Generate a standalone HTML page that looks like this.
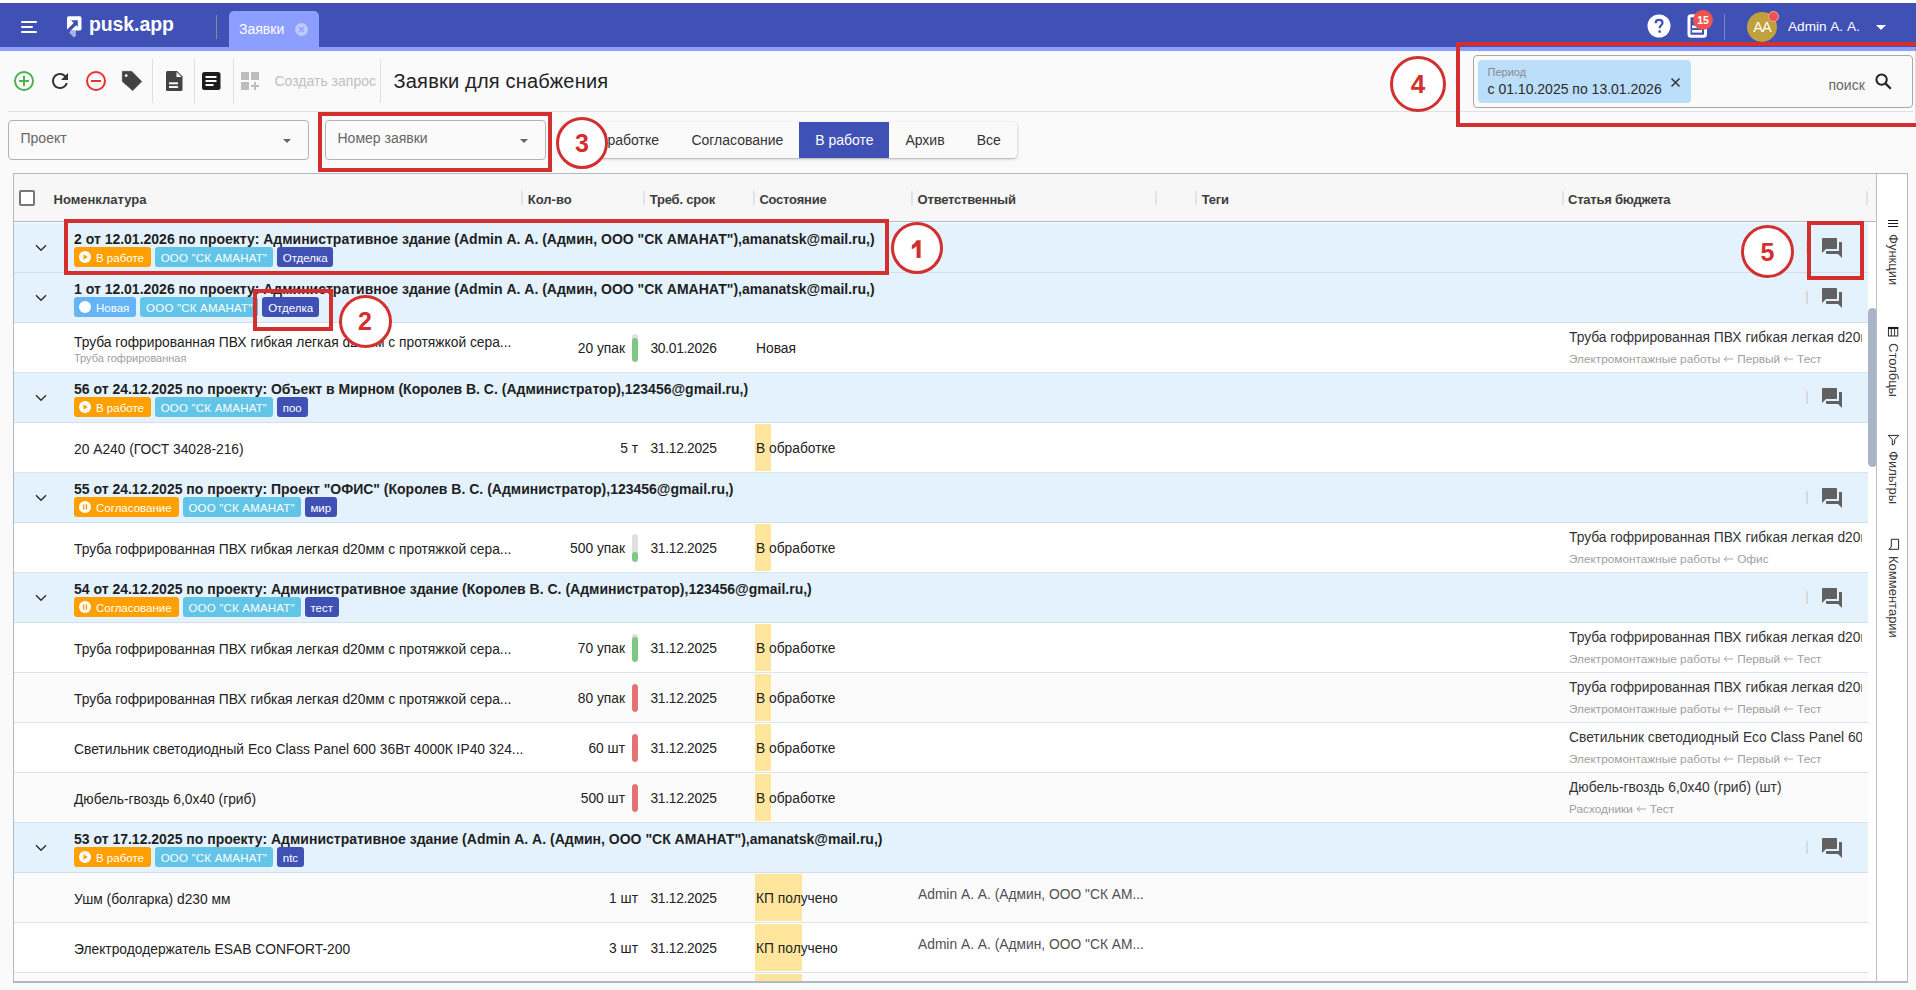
<!DOCTYPE html><html><head><meta charset="utf-8"><title>Заявки</title><style>
*{box-sizing:border-box;margin:0;padding:0}
html,body{width:1916px;height:990px;overflow:hidden;background:#fafafa;font-family:"Liberation Sans",sans-serif;color:#212121}
.abs{position:absolute}
.t{position:absolute;white-space:nowrap;line-height:1}
#topw{left:0;top:0;width:1916px;height:3px;background:#fff}
#hdr{left:0;top:3px;width:1916px;height:44px;background:#3f51b5}
#strip{left:0;top:47px;width:1916px;height:4px;background:#8c9eff}
.sep{position:absolute;width:1px;background:#e0e0e0}
.hsep{position:absolute;height:1px;background:#e0e0e0}
.sel{position:absolute;border:1px solid #b3b3b3;border-radius:4px;background:#fafafa}
.tri{position:absolute;width:0;height:0;border-left:4.5px solid transparent;border-right:4.5px solid transparent;border-top:4.5px solid #666}
#tabs{left:562px;top:122px;width:455px;height:36px;background:#fafafa;border-radius:4px;box-shadow:0 1px 3px rgba(0,0,0,.25),0 1px 1px rgba(0,0,0,.08)}
.tab{position:absolute;top:0;height:36px;font-size:14px;line-height:36px;color:#333;white-space:nowrap}
#tbl{left:13px;top:173px;width:1895px;height:810px;border:1px solid #b0b8c4;border-bottom-width:2px;background:#fff;overflow:hidden}
.row{position:absolute;left:0;width:1854px;height:50px;border-bottom:1px solid #dde3ea}
.grp{background:#e3f2fd;border-bottom-color:#d5dde6}
.wh{background:#fff}
.gr{background:#fbfbfb}
.gt{position:absolute;left:60px;top:8.5px;font-weight:bold;font-size:14px;color:#1e1e1e;white-space:nowrap;line-height:1}
.bdg{position:relative;height:20px;border-radius:3px;color:#fff;font-size:11.5px;line-height:20px;white-space:nowrap;padding:0 5.8px}
.bdg span{position:relative;top:1px}
.circ{position:absolute;border:3px solid #d32f2f;border-radius:50%;background:#fff;color:#d32f2f;font-weight:bold;text-align:center}
.rbox{position:absolute;border:4px solid #d32f2f}
.it{position:absolute;font-size:13.8px;color:#222;white-space:nowrap;line-height:1}
.sub{position:absolute;color:#9e9e9e;white-space:nowrap;line-height:1}
</style></head><body>
<div class="abs" id="topw"></div><div class="abs" id="hdr"></div><div class="abs" id="strip"></div>
<div class="abs" style="left:21px;top:21px;width:16px;height:2px;background:#fff;border-radius:1px"></div>
<div class="abs" style="left:21px;top:26px;width:12px;height:2px;background:#fff;border-radius:1px"></div>
<div class="abs" style="left:21px;top:31px;width:16px;height:2px;background:#fff;border-radius:1px"></div>
<svg class="abs" style="left:62px;top:12px" width="28" height="28" viewBox="0 0 28 28"><rect x="5" y="4.2" width="14.5" height="14.2" rx="1.6" fill="#fff"/><path d="M4.5 20.5 L13.5 11.5" stroke="#3f51b5" stroke-width="3.2"/><path d="M9 8.2 H15.8 V15 Z" fill="#3f51b5"/><path d="M7 20.6 L9 18.6 H13.9 V24 L12 25.6 Z" fill="#fff" fill-opacity="0.55"/></svg>
<div class="t" style="left:89px;top:14.5px;font-size:19.5px;font-weight:bold;color:#fff;letter-spacing:-0.1px">pusk.app</div>
<div class="abs" style="left:216px;top:15px;width:1px;height:24px;background:#78909c"></div>
<div class="abs" style="left:229px;top:11px;width:90px;height:40px;background:#8c9eff;border-radius:5px 5px 0 0"></div>
<div class="t" style="left:239px;top:22px;font-size:14px;color:#fff">Заявки</div>
<svg class="abs" style="left:294px;top:22px" width="15" height="15" viewBox="0 0 15 15"><circle cx="7.5" cy="7.5" r="6.5" fill="#fff" fill-opacity="0.45"/><path d="M5 5 L10 10 M10 5 L5 10" stroke="#8c9eff" stroke-width="1.4"/></svg>
<svg class="abs" style="left:1647px;top:14px" width="24" height="24" viewBox="0 0 24 24"><circle cx="12" cy="12" r="11.5" fill="#fff"/><path d="M8.6 9.2 C8.6 7.2 10.1 5.9 12.1 5.9 C14.1 5.9 15.5 7.2 15.5 8.9 C15.5 11.2 12.6 11.5 12.6 14.2" fill="none" stroke="#3f51b5" stroke-width="2.2"/><rect x="11.4" y="16.3" width="2.4" height="2.4" fill="#3f51b5"/></svg>
<svg class="abs" style="left:1687px;top:14px" width="22" height="25" viewBox="0 0 22 25"><rect x="2" y="1.8" width="16.5" height="20.5" rx="2" fill="none" stroke="#fff" stroke-width="3"/><rect x="5" y="11.5" width="10" height="2.6" fill="#fff"/><rect x="5" y="16" width="10" height="2.6" fill="#fff"/></svg>
<div class="abs" style="left:1693px;top:10px;width:20px;height:20px;border-radius:50%;background:#ef5350;color:#fff;font-size:10.5px;font-weight:bold;text-align:center;line-height:20px">15</div>
<div class="abs" style="left:1724px;top:14px;width:1px;height:26px;background:#7986cb"></div>
<div class="abs" style="left:1747px;top:12px;width:30px;height:30px;border-radius:50%;background:#c0a13e;color:#fff;font-size:14.5px;text-align:center;line-height:30px;letter-spacing:-0.8px">AA</div>
<div class="abs" style="left:1768px;top:10.5px;width:11px;height:11px;border-radius:50%;background:#ef5350;border:1px solid #f7a8a6"></div>
<div class="t" style="left:1788px;top:20px;font-size:13.6px;color:#fff">Admin А. А.</div>
<div class="abs" style="left:1876px;top:25px;width:0;height:0;border-left:5.5px solid transparent;border-right:5.5px solid transparent;border-top:5px solid #fff"></div>
<div class="hsep" style="left:8px;top:111px;width:1905px"></div>
<svg class="abs" style="left:12px;top:69px" width="24" height="24" viewBox="0 0 24 24"><circle cx="12" cy="12" r="9" fill="none" stroke="#4caf50" stroke-width="2"/><path d="M12 7 V17 M7 12 H17" stroke="#4caf50" stroke-width="2"/></svg>
<svg class="abs" style="left:48px;top:69px" width="24" height="24" viewBox="0 0 24 24"><path d="M17.65 6.35A7.958 7.958 0 0 0 12 4c-4.42 0-7.99 3.58-7.99 8s3.57 8 7.99 8c3.73 0 6.84-2.55 7.73-6h-2.08A5.99 5.99 0 0 1 12 18c-3.31 0-6-2.69-6-6s2.69-6 6-6c1.66 0 3.14.69 4.22 1.78L13 11h7V4l-2.35 2.35z" fill="#333"/></svg>
<svg class="abs" style="left:84px;top:69px" width="24" height="24" viewBox="0 0 24 24"><circle cx="12" cy="12" r="9" fill="none" stroke="#f02e2e" stroke-width="2"/><path d="M7 12 H17" stroke="#f02e2e" stroke-width="2"/></svg>
<svg class="abs" style="left:120px;top:69px" width="24" height="24" viewBox="0 0 24 24"><path d="M2.4 2.4 H11.8 L21.6 12.6 L12.7 21.6 L2.4 12.4 Z" fill="#424242" stroke="#424242" stroke-width="0.8" stroke-linejoin="round"/><circle cx="6.2" cy="6.6" r="1.4" fill="#fafafa"/></svg>
<div class="sep" style="left:152px;top:59px;height:44px"></div>
<div class="sep" style="left:194px;top:59px;height:44px"></div>
<div class="sep" style="left:233px;top:59px;height:44px"></div>
<div class="sep" style="left:380px;top:59px;height:44px"></div>
<svg class="abs" style="left:162px;top:69px" width="24" height="24" viewBox="0 0 24 24"><path d="M5.5 2 H15 L20.5 7.5 V20.5 Q20.5 22 19 22 H5.5 Q4 22 4 20.5 V3.5 Q4 2 5.5 2 Z" fill="#424242"/><path d="M14.5 3 V8 H19.5 Z" fill="#fafafa"/><rect x="7" y="13.3" width="9" height="2" fill="#fafafa"/><rect x="7" y="17" width="9" height="2" fill="#fafafa"/></svg>
<svg class="abs" style="left:199px;top:69px" width="24" height="24" viewBox="0 0 24 24"><rect x="3" y="3" width="18.5" height="18" rx="2.5" fill="#1d1d1d"/><rect x="6.5" y="7" width="11" height="2" fill="#fafafa"/><rect x="6.5" y="11" width="11" height="2" fill="#fafafa"/><rect x="6.5" y="15" width="8" height="2" fill="#fafafa"/></svg>
<svg class="abs" style="left:239px;top:69px" width="24" height="24" viewBox="0 0 24 24"><rect x="2" y="3" width="8" height="8" fill="#bdbdbd"/><rect x="12" y="3" width="8" height="8" fill="#bdbdbd"/><rect x="2" y="13" width="8" height="8" fill="#bdbdbd"/><path d="M16 13 V21 M12 17 H20" stroke="#bdbdbd" stroke-width="2"/></svg>
<div class="t" style="left:274.5px;top:74px;font-size:14px;color:#c0c0c0">Создать запрос</div>
<div class="t" style="left:393.5px;top:71px;font-size:20px;color:#222;letter-spacing:0.2px">Заявки для снабжения</div>
<div class="sel" style="left:1473px;top:55px;width:440px;height:53px;border-color:#a8a8a8"></div>
<div class="abs" style="left:1478px;top:60px;width:213px;height:43px;background:#bbdefb;border-radius:4px"></div>
<div class="t" style="left:1487.5px;top:67px;font-size:11px;color:#8a8a8a">Период</div>
<div class="t" style="left:1487.5px;top:82px;font-size:14px;color:#2a2a2a">с 01.10.2025 по 13.01.2026</div>
<svg class="abs" style="left:1670px;top:77px" width="11" height="11" viewBox="0 0 11 11"><path d="M1.5 1.5 L9.5 9.5 M9.5 1.5 L1.5 9.5" stroke="#333" stroke-width="1.5"/></svg>
<div class="t" style="left:1828.5px;top:78px;font-size:14px;color:#666">поиск</div>
<svg class="abs" style="left:1874px;top:72px" width="19" height="19" viewBox="0 0 19 19"><circle cx="7.6" cy="7.6" r="5.2" fill="none" stroke="#222" stroke-width="2"/><path d="M11.4 11.4 L16.8 16.8" stroke="#222" stroke-width="2.2"/></svg>
<div class="sel" style="left:8px;top:120px;width:301px;height:40px"></div>
<div class="t" style="left:20.5px;top:131px;font-size:14px;color:#666">Проект</div>
<div class="tri" style="left:283px;top:139px"></div>
<div class="sel" style="left:325px;top:120px;width:221px;height:40px"></div>
<div class="t" style="left:337.5px;top:131px;font-size:14px;color:#666">Номер заявки</div>
<div class="tri" style="left:520px;top:139px"></div>
<div class="abs" id="tabs">
<div class="tab" style="left:0px;width:113.5px;text-align:center;">В обработке</div>
<div class="tab" style="left:113.5px;width:123.79999999999995px;text-align:center;">Согласование</div>
<div class="tab" style="left:237.29999999999995px;width:90.20000000000005px;text-align:center;background:#3f51b5;color:#fff;">В работе</div>
<div class="tab" style="left:327.5px;width:71.0px;text-align:center;">Архив</div>
<div class="tab" style="left:398.5px;width:56.5px;text-align:center;">Все</div>
</div>
<div class="abs" id="tbl">
<div class="abs" style="left:0;top:0;width:1862px;height:48px;background:#f7f7f7;border-bottom:1px solid #b0b8c4"></div>
<div class="abs" style="left:5px;top:16px;width:16px;height:16px;border:2px solid #777;border-radius:2px;background:#fff"></div>
<div class="t" style="left:39.5px;top:19px;font-size:13px;font-weight:bold;color:#3c3c3c;">Номенклатура</div>
<div class="t" style="left:513.8px;top:19px;font-size:13px;font-weight:bold;color:#3c3c3c;">Кол-во</div>
<div class="t" style="left:635.8px;top:19px;font-size:13px;font-weight:bold;color:#3c3c3c;letter-spacing:-0.22px;">Треб. срок</div>
<div class="t" style="left:745.4px;top:19px;font-size:13px;font-weight:bold;color:#3c3c3c;letter-spacing:-0.22px;">Состояние</div>
<div class="t" style="left:903.6px;top:19px;font-size:13px;font-weight:bold;color:#3c3c3c;letter-spacing:-0.22px;">Ответственный</div>
<div class="t" style="left:1187.7px;top:19px;font-size:13px;font-weight:bold;color:#3c3c3c;letter-spacing:-0.22px;">Теги</div>
<div class="t" style="left:1554px;top:19px;font-size:13px;font-weight:bold;color:#3c3c3c;letter-spacing:-0.22px;">Статья бюджета</div>
<div class="abs" style="left:507px;top:17px;width:2px;height:14px;background:#dde4ee"></div>
<div class="abs" style="left:629px;top:17px;width:2px;height:14px;background:#dde4ee"></div>
<div class="abs" style="left:739px;top:17px;width:2px;height:14px;background:#dde4ee"></div>
<div class="abs" style="left:897px;top:17px;width:2px;height:14px;background:#dde4ee"></div>
<div class="abs" style="left:1141px;top:17px;width:2px;height:14px;background:#dde4ee"></div>
<div class="abs" style="left:1181px;top:17px;width:2px;height:14px;background:#dde4ee"></div>
<div class="abs" style="left:1547.5px;top:17px;width:2px;height:14px;background:#dde4ee"></div>
<div class="abs" style="left:1852px;top:17px;width:2px;height:14px;background:#dde4ee"></div>
<div class="row grp" style="top:49px">
<svg class="abs" style="left:21px;top:21px" width="12" height="8" viewBox="0 0 12 8"><path d="M1 1.2 L6 6.2 L11 1.2" fill="none" stroke="#2b2b2b" stroke-width="1.4"/></svg>
<div class="gt">2 от 12.01.2026 по проекту: Административное здание (Admin А. А. (Админ, ООО &quot;СК АМАНАТ&quot;),amanatsk@mail.ru,)</div>
<div class="abs" style="left:60px;top:24px;height:20px;display:flex;gap:4px">
<div class="bdg" style="background:#ffa000;padding-left:22px;padding-right:7px"><svg style="position:absolute;left:5px;top:4px" width="12" height="12" viewBox="0 0 12 12"><circle cx="6" cy="6" r="6" fill="#fff"/><path d="M4.5 3.2 L8.8 6 L4.5 8.8 Z" fill="#ffa000"/></svg><span>В работе</span></div>
<div class="bdg" style="background:#62c4e6;letter-spacing:0.2px;"><span>ООО &quot;СК АМАНАТ&quot;</span></div>
<div class="bdg" style="background:#3f51b5;"><span>Отделка</span></div>
</div>
<div class="abs" style="left:1792px;top:18px;width:2px;height:13px;background:#d9d9d9"></div>
<svg class="abs" style="left:1805.7px;top:12.8px" width="24" height="24" viewBox="0 0 24 24"><path d="M21 6h-2v9H6v2c0 .55.45 1 1 1h11l4 4V7c0-.55-.45-1-1-1zm-4 6V3c0-.55-.45-1-1-1H3c-.55 0-1 .45-1 1v14l4-4h10c.55 0 1-.45 1-1z" fill="#616161"/></svg>
</div>
<div class="row grp" style="top:99px">
<svg class="abs" style="left:21px;top:21px" width="12" height="8" viewBox="0 0 12 8"><path d="M1 1.2 L6 6.2 L11 1.2" fill="none" stroke="#2b2b2b" stroke-width="1.4"/></svg>
<div class="gt">1 от 12.01.2026 по проекту: Административное здание (Admin А. А. (Админ, ООО &quot;СК АМАНАТ&quot;),amanatsk@mail.ru,)</div>
<div class="abs" style="left:60px;top:24px;height:20px;display:flex;gap:4px">
<div class="bdg" style="background:#64b5f6;padding-left:22px;padding-right:7px"><svg style="position:absolute;left:5px;top:4px" width="12" height="12" viewBox="0 0 12 12"><circle cx="6" cy="6" r="6" fill="#fff"/></svg><span>Новая</span></div>
<div class="bdg" style="background:#62c4e6;letter-spacing:0.2px;"><span>ООО &quot;СК АМАНАТ&quot;</span></div>
<div class="bdg" style="background:#3f51b5;"><span>Отделка</span></div>
</div>
<div class="abs" style="left:1792px;top:18px;width:2px;height:13px;background:#d9d9d9"></div>
<svg class="abs" style="left:1805.7px;top:12.8px" width="24" height="24" viewBox="0 0 24 24"><path d="M21 6h-2v9H6v2c0 .55.45 1 1 1h11l4 4V7c0-.55-.45-1-1-1zm-4 6V3c0-.55-.45-1-1-1H3c-.55 0-1 .45-1 1v14l4-4h10c.55 0 1-.45 1-1z" fill="#616161"/></svg>
</div>
<div class="row wh" style="top:149px">
<div class="it" style="left:60px;top:13px">Труба гофрированная ПВХ гибкая легкая d20мм с протяжкой сера...</div>
<div class="sub" style="left:60px;top:30px;font-size:11px">Труба гофрированная</div>
<div class="it" style="right:1243px;top:19px">20 упак</div>
<div class="abs" style="left:618px;top:11px;width:6px;height:28px;border-radius:3px;background:#e0e0e0;overflow:hidden"><div class="abs" style="left:0;bottom:0;width:6px;height:24px;border-radius:3px;background:#81c784"></div></div>
<div class="it" style="left:636.5px;top:19px;letter-spacing:-0.3px">30.01.2026</div>
<div class="it" style="left:742px;top:19px">Новая</div>
<div class="abs" style="left:1555px;top:0;width:293px;height:49px;overflow:hidden">
<div class="it" style="left:0;top:8px;color:#333">Труба гофрированная ПВХ гибкая легкая d20мм с протяжкой</div>
<div class="sub" style="left:0;top:31px;font-size:11.8px">Электромонтажные работы<svg width="17" height="8" viewBox="0 0 17 8" style="vertical-align:0px"><path d="M4.2 4 H13 M7 1.4 L4.2 4 L7 6.6" fill="none" stroke="#a8a8a8" stroke-width="1"/></svg>Первый<svg width="17" height="8" viewBox="0 0 17 8" style="vertical-align:0px"><path d="M4.2 4 H13 M7 1.4 L4.2 4 L7 6.6" fill="none" stroke="#a8a8a8" stroke-width="1"/></svg>Тест</div>
</div>
</div>
<div class="row grp" style="top:199px">
<svg class="abs" style="left:21px;top:21px" width="12" height="8" viewBox="0 0 12 8"><path d="M1 1.2 L6 6.2 L11 1.2" fill="none" stroke="#2b2b2b" stroke-width="1.4"/></svg>
<div class="gt">56 от 24.12.2025 по проекту: Объект в Мирном (Королев В. С. (Администратор),123456@gmail.ru,)</div>
<div class="abs" style="left:60px;top:24px;height:20px;display:flex;gap:4px">
<div class="bdg" style="background:#ffa000;padding-left:22px;padding-right:7px"><svg style="position:absolute;left:5px;top:4px" width="12" height="12" viewBox="0 0 12 12"><circle cx="6" cy="6" r="6" fill="#fff"/><path d="M4.5 3.2 L8.8 6 L4.5 8.8 Z" fill="#ffa000"/></svg><span>В работе</span></div>
<div class="bdg" style="background:#62c4e6;letter-spacing:0.2px;"><span>ООО &quot;СК АМАНАТ&quot;</span></div>
<div class="bdg" style="background:#3f51b5;"><span>поо</span></div>
</div>
<div class="abs" style="left:1792px;top:18px;width:2px;height:13px;background:#d9d9d9"></div>
<svg class="abs" style="left:1805.7px;top:12.8px" width="24" height="24" viewBox="0 0 24 24"><path d="M21 6h-2v9H6v2c0 .55.45 1 1 1h11l4 4V7c0-.55-.45-1-1-1zm-4 6V3c0-.55-.45-1-1-1H3c-.55 0-1 .45-1 1v14l4-4h10c.55 0 1-.45 1-1z" fill="#616161"/></svg>
</div>
<div class="row wh" style="top:249px">
<div class="it" style="left:60px;top:20px">20 А240 (ГОСТ 34028-216)</div>
<div class="it" style="right:1230px;top:19px">5 т</div>
<div class="it" style="left:636.5px;top:19px;letter-spacing:-0.3px">31.12.2025</div>
<div class="abs" style="left:741px;top:1px;width:16px;height:47px;background:#ffe69c"></div>
<div class="it" style="left:742px;top:19px">В обработке</div>
</div>
<div class="row grp" style="top:299px">
<svg class="abs" style="left:21px;top:21px" width="12" height="8" viewBox="0 0 12 8"><path d="M1 1.2 L6 6.2 L11 1.2" fill="none" stroke="#2b2b2b" stroke-width="1.4"/></svg>
<div class="gt">55 от 24.12.2025 по проекту: Проект &quot;ОФИС&quot; (Королев В. С. (Администратор),123456@gmail.ru,)</div>
<div class="abs" style="left:60px;top:24px;height:20px;display:flex;gap:4px">
<div class="bdg" style="background:#ffa000;padding-left:22px;padding-right:7px"><svg style="position:absolute;left:5px;top:4px" width="12" height="12" viewBox="0 0 12 12"><circle cx="6" cy="6" r="6" fill="#fff"/><rect x="3.9" y="3.3" width="1.4" height="5.4" fill="#ffa000"/><rect x="6.7" y="3.3" width="1.4" height="5.4" fill="#ffa000"/></svg><span>Согласование</span></div>
<div class="bdg" style="background:#62c4e6;letter-spacing:0.2px;"><span>ООО &quot;СК АМАНАТ&quot;</span></div>
<div class="bdg" style="background:#3f51b5;"><span>мир</span></div>
</div>
<div class="abs" style="left:1792px;top:18px;width:2px;height:13px;background:#d9d9d9"></div>
<svg class="abs" style="left:1805.7px;top:12.8px" width="24" height="24" viewBox="0 0 24 24"><path d="M21 6h-2v9H6v2c0 .55.45 1 1 1h11l4 4V7c0-.55-.45-1-1-1zm-4 6V3c0-.55-.45-1-1-1H3c-.55 0-1 .45-1 1v14l4-4h10c.55 0 1-.45 1-1z" fill="#616161"/></svg>
</div>
<div class="row wh" style="top:349px">
<div class="it" style="left:60px;top:20px">Труба гофрированная ПВХ гибкая легкая d20мм с протяжкой сера...</div>
<div class="it" style="right:1243px;top:19px">500 упак</div>
<div class="abs" style="left:618px;top:11px;width:6px;height:28px;border-radius:3px;background:#e0e0e0;overflow:hidden"><div class="abs" style="left:0;bottom:0;width:6px;height:10px;border-radius:3px;background:#81c784"></div></div>
<div class="it" style="left:636.5px;top:19px;letter-spacing:-0.3px">31.12.2025</div>
<div class="abs" style="left:741px;top:1px;width:16px;height:47px;background:#ffe69c"></div>
<div class="it" style="left:742px;top:19px">В обработке</div>
<div class="abs" style="left:1555px;top:0;width:293px;height:49px;overflow:hidden">
<div class="it" style="left:0;top:8px;color:#333">Труба гофрированная ПВХ гибкая легкая d20мм с протяжкой</div>
<div class="sub" style="left:0;top:31px;font-size:11.8px">Электромонтажные работы<svg width="17" height="8" viewBox="0 0 17 8" style="vertical-align:0px"><path d="M4.2 4 H13 M7 1.4 L4.2 4 L7 6.6" fill="none" stroke="#a8a8a8" stroke-width="1"/></svg>Офис</div>
</div>
</div>
<div class="row grp" style="top:399px">
<svg class="abs" style="left:21px;top:21px" width="12" height="8" viewBox="0 0 12 8"><path d="M1 1.2 L6 6.2 L11 1.2" fill="none" stroke="#2b2b2b" stroke-width="1.4"/></svg>
<div class="gt">54 от 24.12.2025 по проекту: Административное здание (Королев В. С. (Администратор),123456@gmail.ru,)</div>
<div class="abs" style="left:60px;top:24px;height:20px;display:flex;gap:4px">
<div class="bdg" style="background:#ffa000;padding-left:22px;padding-right:7px"><svg style="position:absolute;left:5px;top:4px" width="12" height="12" viewBox="0 0 12 12"><circle cx="6" cy="6" r="6" fill="#fff"/><rect x="3.9" y="3.3" width="1.4" height="5.4" fill="#ffa000"/><rect x="6.7" y="3.3" width="1.4" height="5.4" fill="#ffa000"/></svg><span>Согласование</span></div>
<div class="bdg" style="background:#62c4e6;letter-spacing:0.2px;"><span>ООО &quot;СК АМАНАТ&quot;</span></div>
<div class="bdg" style="background:#3f51b5;"><span>тест</span></div>
</div>
<div class="abs" style="left:1792px;top:18px;width:2px;height:13px;background:#d9d9d9"></div>
<svg class="abs" style="left:1805.7px;top:12.8px" width="24" height="24" viewBox="0 0 24 24"><path d="M21 6h-2v9H6v2c0 .55.45 1 1 1h11l4 4V7c0-.55-.45-1-1-1zm-4 6V3c0-.55-.45-1-1-1H3c-.55 0-1 .45-1 1v14l4-4h10c.55 0 1-.45 1-1z" fill="#616161"/></svg>
</div>
<div class="row wh" style="top:449px">
<div class="it" style="left:60px;top:20px">Труба гофрированная ПВХ гибкая легкая d20мм с протяжкой сера...</div>
<div class="it" style="right:1243px;top:19px">70 упак</div>
<div class="abs" style="left:618px;top:11px;width:6px;height:28px;border-radius:3px;background:#e0e0e0;overflow:hidden"><div class="abs" style="left:0;bottom:0;width:6px;height:25px;border-radius:3px;background:#81c784"></div></div>
<div class="it" style="left:636.5px;top:19px;letter-spacing:-0.3px">31.12.2025</div>
<div class="abs" style="left:741px;top:1px;width:16px;height:47px;background:#ffe69c"></div>
<div class="it" style="left:742px;top:19px">В обработке</div>
<div class="abs" style="left:1555px;top:0;width:293px;height:49px;overflow:hidden">
<div class="it" style="left:0;top:8px;color:#333">Труба гофрированная ПВХ гибкая легкая d20мм с протяжкой</div>
<div class="sub" style="left:0;top:31px;font-size:11.8px">Электромонтажные работы<svg width="17" height="8" viewBox="0 0 17 8" style="vertical-align:0px"><path d="M4.2 4 H13 M7 1.4 L4.2 4 L7 6.6" fill="none" stroke="#a8a8a8" stroke-width="1"/></svg>Первый<svg width="17" height="8" viewBox="0 0 17 8" style="vertical-align:0px"><path d="M4.2 4 H13 M7 1.4 L4.2 4 L7 6.6" fill="none" stroke="#a8a8a8" stroke-width="1"/></svg>Тест</div>
</div>
</div>
<div class="row gr" style="top:499px">
<div class="it" style="left:60px;top:20px">Труба гофрированная ПВХ гибкая легкая d20мм с протяжкой сера...</div>
<div class="it" style="right:1243px;top:19px">80 упак</div>
<div class="abs" style="left:618px;top:11px;width:6px;height:28px;border-radius:3px;background:#e0e0e0;overflow:hidden"><div class="abs" style="left:0;bottom:0;width:6px;height:28px;border-radius:3px;background:#e57373"></div></div>
<div class="it" style="left:636.5px;top:19px;letter-spacing:-0.3px">31.12.2025</div>
<div class="abs" style="left:741px;top:1px;width:16px;height:47px;background:#ffe69c"></div>
<div class="it" style="left:742px;top:19px">В обработке</div>
<div class="abs" style="left:1555px;top:0;width:293px;height:49px;overflow:hidden">
<div class="it" style="left:0;top:8px;color:#333">Труба гофрированная ПВХ гибкая легкая d20мм с протяжкой</div>
<div class="sub" style="left:0;top:31px;font-size:11.8px">Электромонтажные работы<svg width="17" height="8" viewBox="0 0 17 8" style="vertical-align:0px"><path d="M4.2 4 H13 M7 1.4 L4.2 4 L7 6.6" fill="none" stroke="#a8a8a8" stroke-width="1"/></svg>Первый<svg width="17" height="8" viewBox="0 0 17 8" style="vertical-align:0px"><path d="M4.2 4 H13 M7 1.4 L4.2 4 L7 6.6" fill="none" stroke="#a8a8a8" stroke-width="1"/></svg>Тест</div>
</div>
</div>
<div class="row wh" style="top:549px">
<div class="it" style="left:60px;top:20px">Светильник светодиодный Eco Class Panel 600 36Вт 4000К IP40 324...</div>
<div class="it" style="right:1243px;top:19px">60 шт</div>
<div class="abs" style="left:618px;top:11px;width:6px;height:28px;border-radius:3px;background:#e0e0e0;overflow:hidden"><div class="abs" style="left:0;bottom:0;width:6px;height:28px;border-radius:3px;background:#e57373"></div></div>
<div class="it" style="left:636.5px;top:19px;letter-spacing:-0.3px">31.12.2025</div>
<div class="abs" style="left:741px;top:1px;width:16px;height:47px;background:#ffe69c"></div>
<div class="it" style="left:742px;top:19px">В обработке</div>
<div class="abs" style="left:1555px;top:0;width:293px;height:49px;overflow:hidden">
<div class="it" style="left:0;top:8px;color:#333">Светильник светодиодный Eco Class Panel 600 36Вт</div>
<div class="sub" style="left:0;top:31px;font-size:11.8px">Электромонтажные работы<svg width="17" height="8" viewBox="0 0 17 8" style="vertical-align:0px"><path d="M4.2 4 H13 M7 1.4 L4.2 4 L7 6.6" fill="none" stroke="#a8a8a8" stroke-width="1"/></svg>Первый<svg width="17" height="8" viewBox="0 0 17 8" style="vertical-align:0px"><path d="M4.2 4 H13 M7 1.4 L4.2 4 L7 6.6" fill="none" stroke="#a8a8a8" stroke-width="1"/></svg>Тест</div>
</div>
</div>
<div class="row gr" style="top:599px">
<div class="it" style="left:60px;top:20px">Дюбель-гвоздь 6,0х40 (гриб)</div>
<div class="it" style="right:1243px;top:19px">500 шт</div>
<div class="abs" style="left:618px;top:11px;width:6px;height:28px;border-radius:3px;background:#e0e0e0;overflow:hidden"><div class="abs" style="left:0;bottom:0;width:6px;height:28px;border-radius:3px;background:#e57373"></div></div>
<div class="it" style="left:636.5px;top:19px;letter-spacing:-0.3px">31.12.2025</div>
<div class="abs" style="left:741px;top:1px;width:16px;height:47px;background:#ffe69c"></div>
<div class="it" style="left:742px;top:19px">В обработке</div>
<div class="abs" style="left:1555px;top:0;width:293px;height:49px;overflow:hidden">
<div class="it" style="left:0;top:8px;color:#333">Дюбель-гвоздь 6,0х40 (гриб) (шт)</div>
<div class="sub" style="left:0;top:31px;font-size:11.8px">Расходники<svg width="17" height="8" viewBox="0 0 17 8" style="vertical-align:0px"><path d="M4.2 4 H13 M7 1.4 L4.2 4 L7 6.6" fill="none" stroke="#a8a8a8" stroke-width="1"/></svg>Тест</div>
</div>
</div>
<div class="row grp" style="top:649px">
<svg class="abs" style="left:21px;top:21px" width="12" height="8" viewBox="0 0 12 8"><path d="M1 1.2 L6 6.2 L11 1.2" fill="none" stroke="#2b2b2b" stroke-width="1.4"/></svg>
<div class="gt">53 от 17.12.2025 по проекту: Административное здание (Admin А. А. (Админ, ООО &quot;СК АМАНАТ&quot;),amanatsk@mail.ru,)</div>
<div class="abs" style="left:60px;top:24px;height:20px;display:flex;gap:4px">
<div class="bdg" style="background:#ffa000;padding-left:22px;padding-right:7px"><svg style="position:absolute;left:5px;top:4px" width="12" height="12" viewBox="0 0 12 12"><circle cx="6" cy="6" r="6" fill="#fff"/><path d="M4.5 3.2 L8.8 6 L4.5 8.8 Z" fill="#ffa000"/></svg><span>В работе</span></div>
<div class="bdg" style="background:#62c4e6;letter-spacing:0.2px;"><span>ООО &quot;СК АМАНАТ&quot;</span></div>
<div class="bdg" style="background:#3f51b5;"><span>ntc</span></div>
</div>
<div class="abs" style="left:1792px;top:18px;width:2px;height:13px;background:#d9d9d9"></div>
<svg class="abs" style="left:1805.7px;top:12.8px" width="24" height="24" viewBox="0 0 24 24"><path d="M21 6h-2v9H6v2c0 .55.45 1 1 1h11l4 4V7c0-.55-.45-1-1-1zm-4 6V3c0-.55-.45-1-1-1H3c-.55 0-1 .45-1 1v14l4-4h10c.55 0 1-.45 1-1z" fill="#616161"/></svg>
</div>
<div class="row gr" style="top:699px">
<div class="it" style="left:60px;top:20px">Ушм (болгарка) d230 мм</div>
<div class="it" style="right:1230px;top:19px">1 шт</div>
<div class="it" style="left:636.5px;top:19px;letter-spacing:-0.3px">31.12.2025</div>
<div class="abs" style="left:741px;top:1px;width:47px;height:47px;background:#ffe69c"></div>
<div class="it" style="left:742px;top:19px">КП получено</div>
<div class="it" style="left:904px;top:15px;color:#505050">Admin А. А. (Админ, ООО &quot;СК АМ...</div>
</div>
<div class="row wh" style="top:749px">
<div class="it" style="left:60px;top:20px">Электрододержатель ESAB CONFORT-200</div>
<div class="it" style="right:1230px;top:19px">3 шт</div>
<div class="it" style="left:636.5px;top:19px;letter-spacing:-0.3px">31.12.2025</div>
<div class="abs" style="left:741px;top:1px;width:47px;height:47px;background:#ffe69c"></div>
<div class="it" style="left:742px;top:19px">КП получено</div>
<div class="it" style="left:904px;top:15px;color:#505050">Admin А. А. (Админ, ООО &quot;СК АМ...</div>
</div>
<div class="row gr" style="top:799px">
<div class="abs" style="left:741px;top:1px;width:47px;height:47px;background:#ffe69c"></div>
</div>
<div class="abs" style="left:1854px;top:134px;width:9px;height:159px;border-radius:4.5px;background:#a9b4c6"></div>
<div class="abs" style="left:1862px;top:0;width:31px;height:808px;background:#fff;border-left:1px solid #b8c0cc"></div>
</div>
<svg class="abs" style="left:1880px;top:210px" width="25" height="430" viewBox="1880 210 25 430"><path d="M1888 220.5H1898.2M1888 223.5H1898.2M1888 226.5H1898.2" stroke="#1a1a1a" stroke-width="1"/><rect x="1888.4" y="327.4" width="9.4" height="8.6" fill="none" stroke="#1a1a1a" stroke-width="0.9"/><rect x="1888" y="327" width="10.2" height="2" fill="#1a1a1a"/><path d="M1891.3 328V336M1894.6 328V336" stroke="#1a1a1a" stroke-width="0.9"/><path d="M1888.3 435.4 H1898.8 L1894.7 439.6 V443.4 L1892.3 445 V439.6 Z" fill="none" stroke="#1a1a1a" stroke-width="0.95" stroke-linejoin="round"/><path d="M1891.3 539.3 H1898.6 V549.3 H1888.8 Q1891.3 548 1891.3 546 Z" fill="none" stroke="#1a1a1a" stroke-width="0.95" stroke-linejoin="round"/></svg>
<div class="t" style="left:1900px;top:234px;font-size:13px;color:#3a3a3a;transform-origin:0 0;transform:rotate(90deg)">Функции</div>
<div class="t" style="left:1900px;top:343px;font-size:13px;color:#3a3a3a;transform-origin:0 0;transform:rotate(90deg)">Столбцы</div>
<div class="t" style="left:1900px;top:451px;font-size:13px;color:#3a3a3a;transform-origin:0 0;transform:rotate(90deg)">Фильтры</div>
<div class="t" style="left:1900px;top:556px;font-size:13px;color:#3a3a3a;transform-origin:0 0;transform:rotate(90deg)">Комментарии</div>
<div class="rbox" style="left:1456px;top:42px;width:464px;height:85px"></div>
<div class="abs" style="left:1915px;top:46px;width:1px;height:77px;background:rgba(211,47,47,0.18)"></div>
<div class="circ" style="left:1390px;top:55.5px;width:56px;height:56px;font-size:26px;line-height:50px">4</div>
<div class="rbox" style="left:318px;top:112px;width:234px;height:60px"></div>
<div class="circ" style="left:556px;top:116.5px;width:52px;height:52px;font-size:25px;line-height:46px">3</div>
<div class="rbox" style="left:64px;top:219px;width:825px;height:56px"></div>
<div class="circ" style="left:891px;top:222px;width:52px;height:52px;font-size:25px;line-height:46px"></div>
<svg class="abs" style="left:900px;top:230px" width="30" height="36" viewBox="900 230 30 36"><path d="M916.6 240.3 H920.6 V258 H916.6 V246.2 Q914.5 248 911.8 249.2 V245.3 Q915 243.8 916.6 240.3 Z" fill="#d32f2f"/></svg>
<div class="rbox" style="left:253px;top:289px;width:80px;height:42px"></div>
<div class="circ" style="left:338.5px;top:294.5px;width:53px;height:53px;font-size:25px;line-height:47px">2</div>
<div class="rbox" style="left:1807px;top:221px;width:57px;height:59px"></div>
<div class="circ" style="left:1741px;top:225px;width:53px;height:53px;font-size:25px;line-height:49px">5</div>
</body></html>
